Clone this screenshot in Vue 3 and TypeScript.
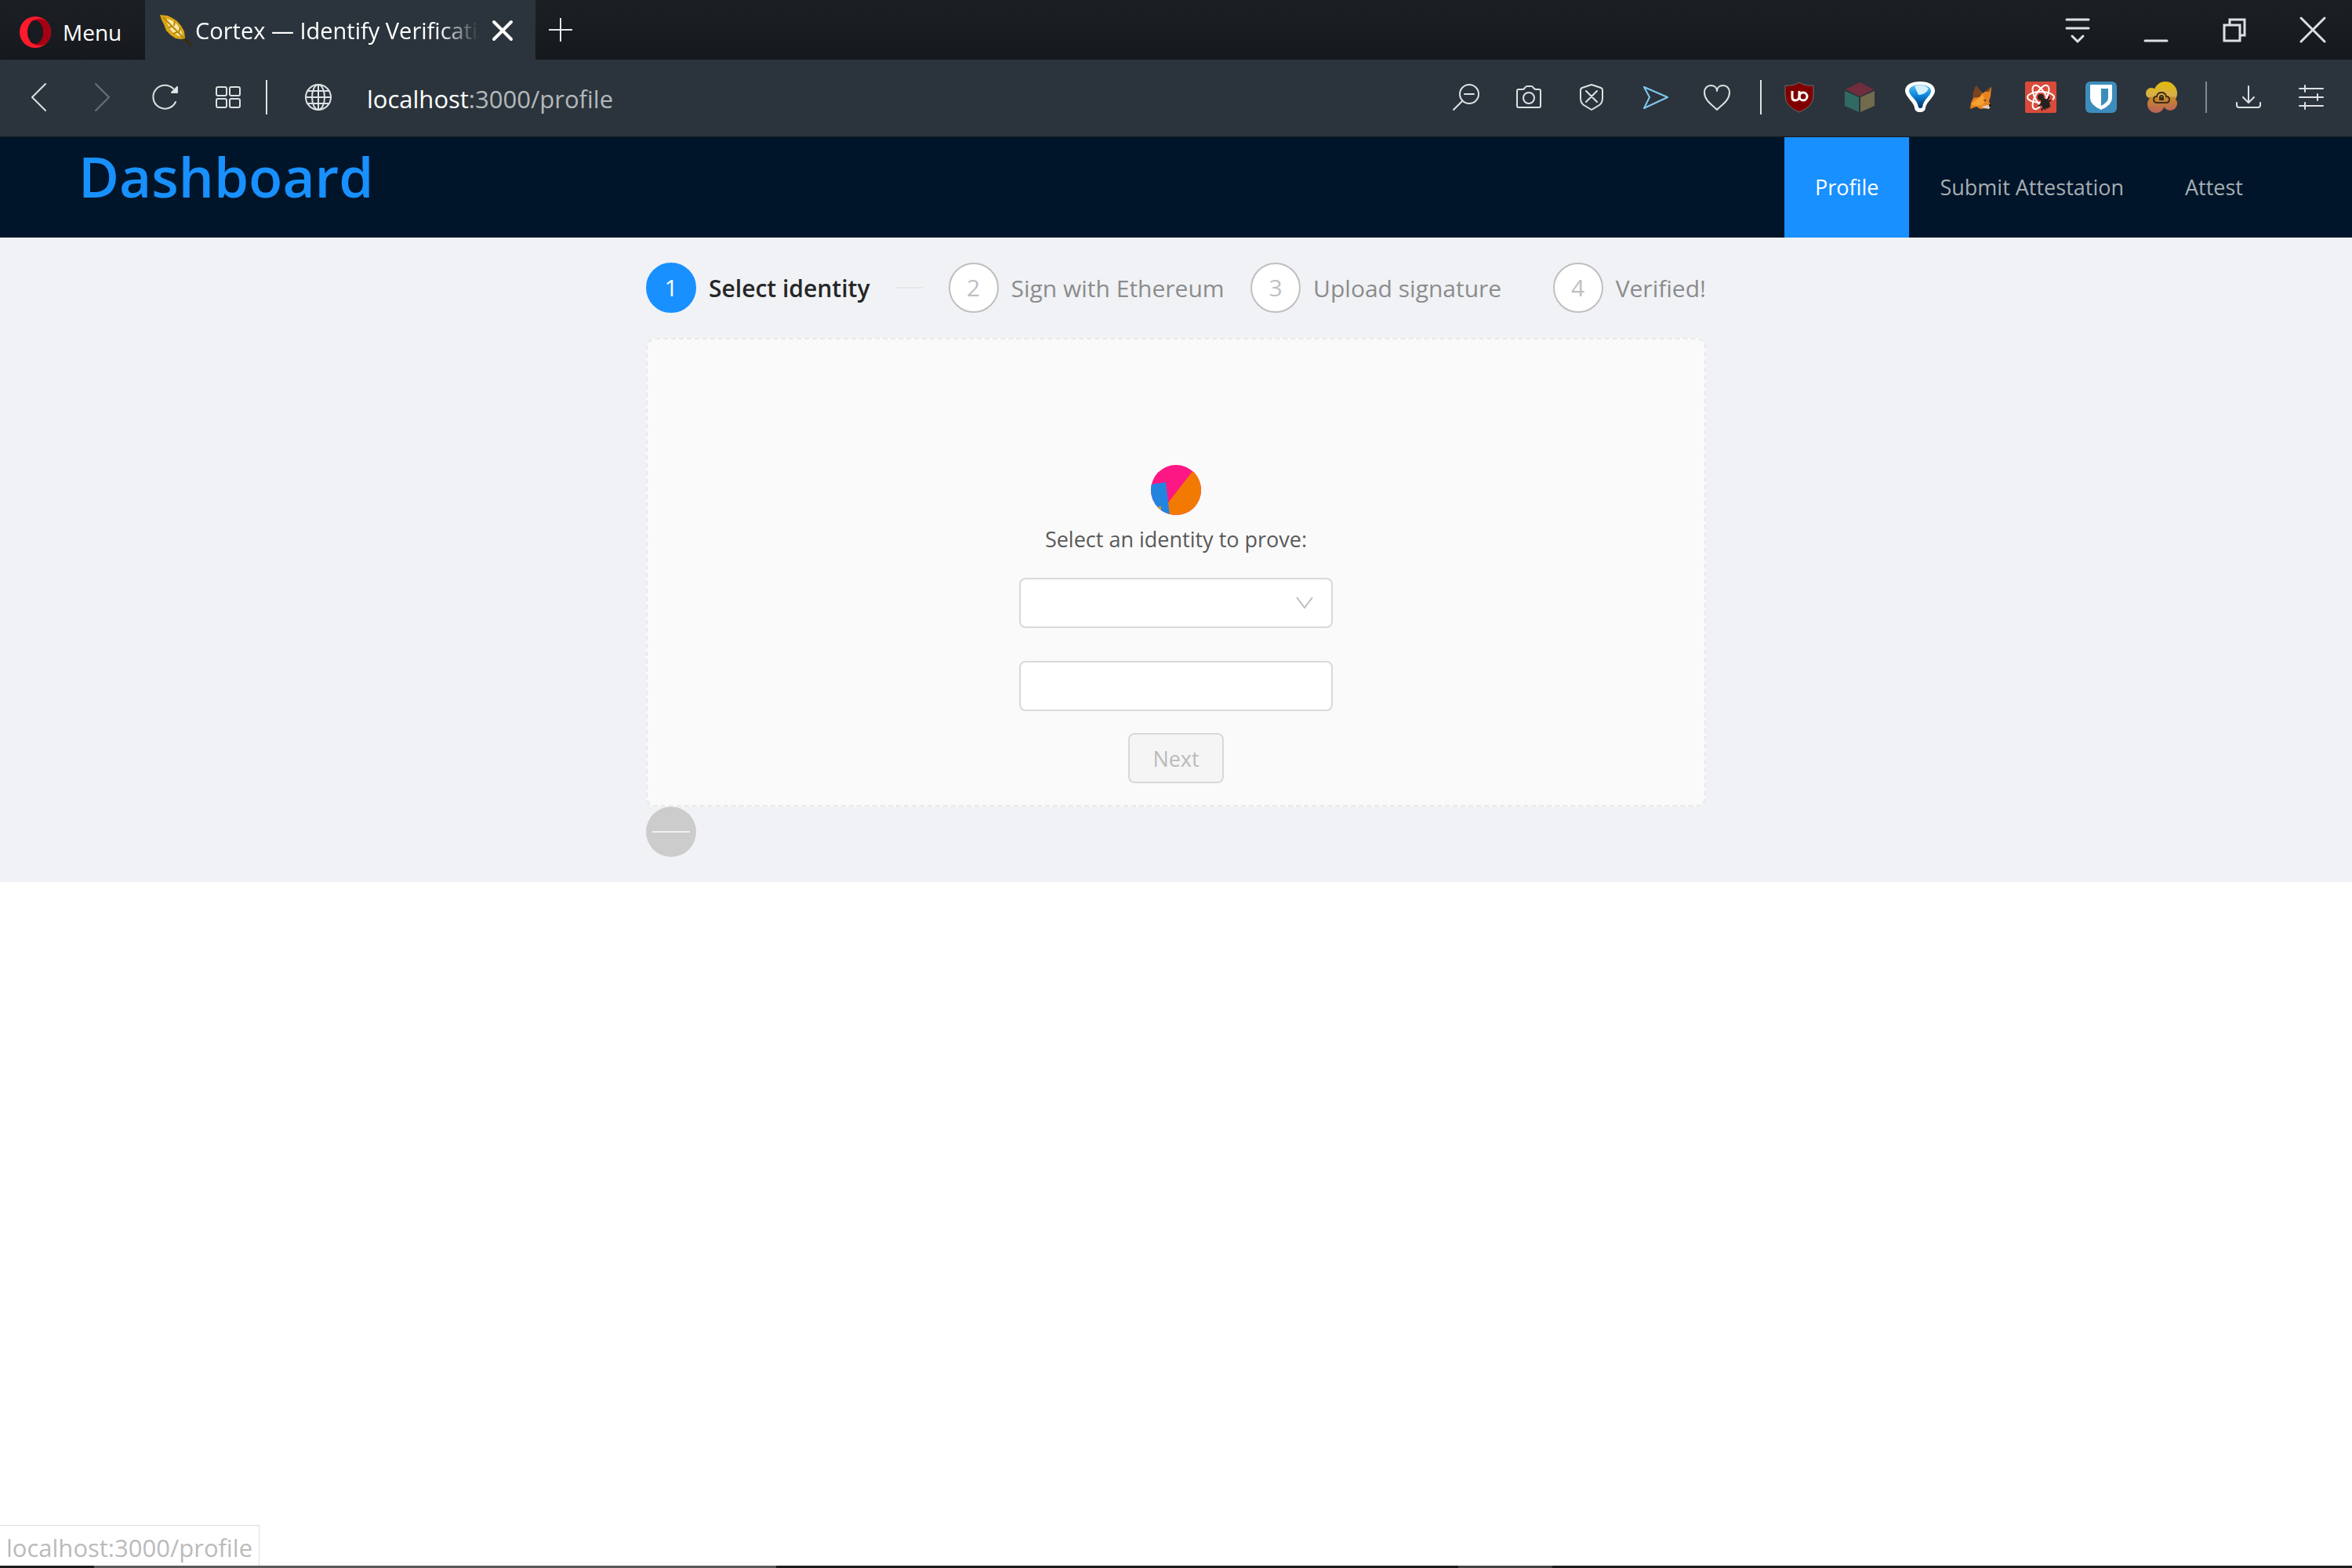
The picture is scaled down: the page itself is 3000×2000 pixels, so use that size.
<script setup lang="ts">
import { ref } from 'vue'

interface Step { title: string; active: boolean }

const steps: Step[] = [
  { title: 'Select identity', active: true },
  { title: 'Sign with Ethereum', active: false },
  { title: 'Upload signature', active: false },
  { title: 'Verified!', active: false },
]
const links = ['Profile', 'Submit Attestation', 'Attest']
const current = ref('Profile')
const provider = ref('')
const identity = ref('')
</script>

<template>
  <div class="window">
    <div class="tabbar">
      <button class="menu" type="button">
        <svg width="40" height="40" viewBox="0 0 40 40" aria-hidden="true">
          <circle cx="20" cy="20" r="20" fill="#ff1b2d" />
          <path fill="#a60014" d="M14 7Q19 3 26 3Q30 3 33 5A20 20 0 0 1 33 35Q30 37 26 37Q19 37 14 33z" />
          <ellipse cx="20" cy="20" rx="10" ry="15" fill="#181b1f" />
        </svg>
        <span>Menu</span>
      </button>
      <div class="tab">
        <svg width="42" height="42" viewBox="0 0 42 42" aria-hidden="true">
          <path fill="#d9a514" d="M1 1l10 1l6 3l6 4l5 6l4 7l1 9l-5 1l-7-1l-6-4l-6-6l-3-8l-3-6z" />
          <path fill="#f9eaa8" d="M10 6l6 2l6 4l4 6l3 6l1 4l-5 0l-7-4l-5-6l-3-7z" />
          <path fill="none" stroke="#b8860b" stroke-width="2" d="M5 4l26 26M12 17l4-1M18 25l5-2M20 9l-1 6M27 17l-2 6" />
          <path fill="#3a2a02" d="M33 31l5 2l-1 4l-4-1zM37 36l5 2l-1 3l-3-1z" />
        </svg>
        <span class="tab-title">Cortex — Identify Verification</span>
        <button class="plain" type="button" aria-label="Close tab">
          <svg width="28" height="28" viewBox="0 0 28 28"><path d="M3 3l22 22M25 3L3 25" stroke="#fff" stroke-width="4" stroke-linecap="round" /></svg>
        </button>
      </div>
      <button class="plain new-tab" type="button" aria-label="New tab">
        <svg width="30" height="30" viewBox="0 0 30 30"><path d="M15 0v30M0 15h30" stroke="#e4e8ea" stroke-width="2" /></svg>
      </button>
      <div class="window-buttons">
        <button class="plain" type="button" aria-label="Tab menu">
          <svg width="40" height="40" viewBox="0 0 40 40" class="line heavy"><path d="M6 9h28M6 20h28M13 30l7 7l7-7" /></svg>
        </button>
        <button class="plain" type="button" aria-label="Minimize">
          <svg width="40" height="40" viewBox="0 0 40 40" class="line heavy"><path d="M6 36h28" /></svg>
        </button>
        <button class="plain" type="button" aria-label="Restore">
          <svg width="40" height="40" viewBox="0 0 40 40" class="line heavy square"><path d="M7 16h20v20H7zM14 16V9h19v20h-6" /></svg>
        </button>
        <button class="plain" type="button" aria-label="Close">
          <svg width="40" height="40" viewBox="0 0 40 40" class="line heavy"><path d="M5 7l30 30M35 7L5 37" /></svg>
        </button>
      </div>
    </div>

    <div class="toolbar">
      <div class="nav-buttons">
        <button class="plain" type="button" aria-label="Back">
          <svg width="40" height="40" viewBox="0 0 40 40" class="line"><path d="M27 3L10 20l17 17" /></svg>
        </button>
        <button class="plain dim" type="button" aria-label="Forward">
          <svg width="40" height="40" viewBox="0 0 40 40" class="line"><path d="M11 3l17 17l-17 17" /></svg>
        </button>
        <button class="plain" type="button" aria-label="Reload">
          <svg width="40" height="40" viewBox="0 0 40 40" class="line"><path d="M33 26A15 15 0 1 1 30 9" /><path d="M35 7v7h-7z" fill="#e4e8ea" /></svg>
        </button>
        <button class="plain" type="button" aria-label="Speed dial">
          <svg width="40" height="40" viewBox="0 0 40 40" class="line"><rect x="5" y="7" width="13" height="11" rx="2" /><rect x="22" y="7" width="13" height="11" rx="2" /><rect x="5" y="22" width="13" height="11" rx="2" /><rect x="22" y="22" width="13" height="11" rx="2" /></svg>
        </button>
      </div>
      <i class="rule"></i>
      <svg class="globe line" width="40" height="40" viewBox="0 0 40 40" aria-hidden="true"><circle cx="20" cy="20" r="16" /><ellipse cx="20" cy="20" rx="8" ry="16" /><path d="M4 20h32M7 12h26M7 28h26M20 4v32" /></svg>
      <div class="address"><b>localhost</b>:3000/profile</div>
      <div class="page-buttons">
        <button class="plain" type="button" aria-label="Zoom out">
          <svg width="40" height="40" viewBox="0 0 40 40" class="line"><circle cx="24" cy="16" r="12" /><path d="M15 25L4 36M18 16h12" /></svg>
        </button>
        <button class="plain" type="button" aria-label="Snapshot">
          <svg width="40" height="40" viewBox="0 0 40 40" class="line"><path d="M7 10h5q2 0 3-2t3-2h5q2 0 3 2t3 2h4q2 0 2 2v19q0 2-2 2H7q-2 0-2-2V12q0-2 2-2z" /><circle cx="20" cy="21" r="7" /></svg>
        </button>
        <button class="plain" type="button" aria-label="Ad blocker">
          <svg width="40" height="40" viewBox="0 0 40 40" class="line"><path d="M20 4l12 4q2 1 2 3v10q0 6-4 9l-10 6l-10-6q-4-3-4-9V11q0-2 2-3zM13 12l14 14M27 12L13 26" /></svg>
        </button>
        <button class="plain flow" type="button" aria-label="My Flow">
          <svg width="40" height="40" viewBox="0 0 40 40" class="line"><path d="M7 7l30 13L7 34l7-14z" /></svg>
        </button>
        <button class="plain" type="button" aria-label="Bookmark">
          <svg width="40" height="40" viewBox="0 0 40 40" class="line"><path d="M20 36C14 30 4 24 4 14c0-6 4-9 8-9c5 0 8 3 8 7c0-4 3-7 8-7c4 0 8 3 8 9c0 10-10 16-16 22z" /></svg>
        </button>
      </div>
      <i class="rule"></i>
      <div class="extensions">
        <button class="plain" type="button" aria-label="uBlock Origin">
          <svg width="40" height="40" viewBox="0 0 40 40"><path fill="#800000" stroke="#6b6b6b" d="M20 1q7 5 18 4v13q0 14-18 21Q2 32 2 18V5q11 1 18-4z" /><path fill="none" stroke="#fff" stroke-width="3" d="M11 12v8q0 4 4 4t5-4v-8" /><circle cx="25" cy="19" r="5" fill="none" stroke="#fff" stroke-width="3" /></svg>
        </button>
        <button class="plain" type="button" aria-label="Cube">
          <svg width="40" height="40" viewBox="0 0 40 40"><path fill="#702d3d" d="M20 1l18 9l-18 9L2 10z" /><path fill="#306a62" d="M1 12l18 8v19L1 31z" /><path fill="#716a4c" d="M39 12l-18 8v19l18-8z" /></svg>
        </button>
        <button class="plain" type="button" aria-label="Balloon">
          <svg width="40" height="40" viewBox="0 0 40 40">
            <defs><linearGradient id="drop" x1="0" y1="0" x2="0" y2="1"><stop offset="0" stop-color="#5cc0f5" /><stop offset=".45" stop-color="#0b86e0" /><stop offset="1" stop-color="#04315f" /></linearGradient></defs>
            <path fill="#fff" d="M20 0c11 0 19 4 19 12c0 7-10 13-12 21c0 4-3 6-7 6s-7-2-7-6C11 25 1 19 1 12C1 4 9 0 20 0z" />
            <path fill="url(#drop)" d="M20 4c8 0 14 3 14 8c0 6-10 11-11 21q-3 2-5 0C17 23 6 18 6 12c0-5 6-8 14-8z" />
            <path fill="#d6effd" d="M13 6q11-4 18 3q-4 8-13 8z" />
          </svg>
        </button>
        <button class="plain" type="button" aria-label="MetaMask">
          <svg width="40" height="40" viewBox="0 0 40 40"><path fill="#e8821e" d="M14 6l9 9l11-8l-1 12l-2 6l2 6l-4 3l-9 1l-5-3l-8 3l1-8l3-6z" /><path fill="#7a4420" d="M15 5l7 10l-3 5l-9 1l1-8zM34 6l-9 7l6 0z" /><path fill="#f8a130" d="M19 20l4-4l3 8l-3 6l-8 1l-7-2z" /><path fill="#e0d0c0" d="M21 32l8-2l4 1l-2 4l-5-1z" /><path fill="#222" d="M31 29h3v3h-3zM23 24l4-1v2z" /></svg>
        </button>
        <button class="plain" type="button" aria-label="React Developer Tools">
          <svg width="40" height="40" viewBox="0 0 40 40"><rect width="40" height="40" rx="2" fill="#d94b3a" /><g fill="none" stroke="#fff" stroke-width="2"><ellipse cx="20" cy="20" rx="17" ry="7" /><ellipse cx="20" cy="20" rx="17" ry="7" transform="rotate(60 20 20)" /><ellipse cx="20" cy="20" rx="17" ry="7" transform="rotate(120 20 20)" /></g><path fill="#d94b3a" d="M20 24l14-4l3 8l-7 9H19z" /><path d="M17 31L33 24M21 37L31 19M26 36l-6-9M32 32L22 23" stroke="#222" stroke-width="2" /><ellipse cx="26" cy="28" rx="5" ry="7" fill="#222" transform="rotate(-35 26 28)" /><circle cx="20" cy="20" r="4" fill="#222" /></svg>
        </button>
        <button class="plain" type="button" aria-label="Bitwarden">
          <svg width="40" height="40" viewBox="0 0 40 40"><rect width="40" height="40" rx="6" fill="#3c8dbc" /><path fill="#fff" d="M7 4h26q1 0 1 1v16q0 9-14 15Q6 30 6 21V5q0-1 1-1z" /><path fill="#3c8dbc" d="M20 9h9v12q0 5-9 10z" /></svg>
        </button>
        <button class="plain" type="button" aria-label="Cloud lock">
          <svg width="40" height="40" viewBox="0 0 40 40">
            <defs><linearGradient id="cloud" gradientUnits="userSpaceOnUse" x1="0" y1="0" x2="0" y2="40"><stop offset="0" stop-color="#e0bb08" /><stop offset=".48" stop-color="#d9ae50" /><stop offset=".5" stop-color="#c98a28" /><stop offset="1" stop-color="#b8605c" /></linearGradient></defs>
            <g fill="url(#cloud)"><circle cx="25" cy="15" r="15" /><circle cx="7" cy="15" r="7" /><circle cx="13" cy="29" r="11" /><circle cx="31" cy="28" r="9" /><path d="M6 12h30v14H8z" /></g>
            <path fill="none" stroke="#3a2d18" stroke-width="2" d="M15 27h11q4 0 4-4t-4-4q-1-5-6-5t-6 5q-4 0-4 4t5 4z" /><path fill="#3a2d18" fill-rule="evenodd" d="M17 20q0-3 3-3t3 3v4h-6zm2 0h2q0-1-1-1t-1 1z" />
          </svg>
        </button>
      </div>
      <i class="rule faint"></i>
      <div class="end-buttons">
        <button class="plain" type="button" aria-label="Downloads">
          <svg width="40" height="40" viewBox="0 0 40 40" class="line"><path d="M20 6v20M13 20l7 7l7-7M5 27v3q0 3 3 3h24q3 0 3-3v-3" /></svg>
        </button>
        <button class="plain" type="button" aria-label="Easy setup">
          <svg width="40" height="40" viewBox="0 0 40 40" class="line"><path d="M5 9h30M5 20h30M5 31h30M12 5v8M28 16v8M12 27v8" /></svg>
        </button>
      </div>
    </div>

    <header class="header">
      <h1>Dashboard</h1>
      <nav>
        <a v-for="link in links" :key="link" href="#" :class="{ on: link === current }" @click.prevent="current = link">{{ link }}</a>
      </nav>
    </header>

    <main class="layout">
      <div class="column">
        <ol class="steps">
          <li v-for="(step, i) in steps" :key="step.title" :class="{ active: step.active }">
            <span class="num">{{ i + 1 }}</span>
            <span class="title">{{ step.title }}</span>
          </li>
        </ol>
        <form class="panel" @submit.prevent>
          <svg class="identicon" width="64" height="64" viewBox="0 0 64 64" aria-hidden="true">
            <clipPath id="round"><circle cx="32" cy="32" r="32" /></clipPath>
            <g clip-path="url(#round)">
              <rect width="64" height="64" fill="#fc1785" />
              <path fill="#f37a02" d="M54 7L22 48v16h42V0z" />
              <path fill="#2485e1" d="M0 25l19-3l5 42H0z" />
              <path fill="#d39a2c" d="M9 53h4v4h-4z" />
            </g>
          </svg>
          <label for="provider">Select an identity to prove:</label>
          <div class="select">
            <select id="provider" v-model="provider"></select>
            <svg width="22" height="16" viewBox="0 0 22 16" aria-hidden="true"><path d="M1 1l10 13L21 1" fill="none" stroke="#bfbfbf" stroke-width="2" /></svg>
          </div>
          <input v-model="identity" type="text" aria-label="Identity">
          <button class="next" type="submit" disabled>Next</button>
        </form>
        <div class="avatar"><i></i></div>
      </div>
    </main>

    <div class="status">localhost:3000/profile</div>
    <div class="taskbar"></div>
  </div>
</template>

<style>
body { margin: 0; background: #fff; }
</style>

<style scoped>
* { box-sizing: border-box; }
.window { position: relative; display: flex; flex-direction: column; min-height: 100vh; font-family: "Open Sans", "Noto Sans", sans-serif; font-size: 27px; }
svg { display: block; flex: none; }
.plain { display: block; padding: 0; border: 0; background: none; }
.line { fill: none; stroke: #dde1e3; stroke-width: 2; stroke-linecap: round; stroke-linejoin: round; }
.heavy { stroke-width: 3; }
.square { stroke-linejoin: miter; }
.dim { opacity: 0.35; }

.tabbar { display: flex; align-items: stretch; height: 76px; background: linear-gradient(#1c2024, #15181c); color: #fff; }
.menu { display: flex; align-items: center; gap: 15px; width: 185px; padding: 6px 0 0 25px; border: 0; border-bottom: 1px solid #101315; background: none; color: #fff; font: inherit; font-size: 28px; }
.tab { display: flex; align-items: center; width: 498px; padding: 2px 28px 0 18px; background: #2b343c; }
.tab-title { flex: 1; min-width: 0; margin: 0 16px 0 4px; overflow: hidden; white-space: nowrap; font-size: 29px; line-height: 40px; -webkit-mask-image: linear-gradient(90deg, #000 86%, transparent); mask-image: linear-gradient(90deg, #000 86%, transparent); }
.new-tab { padding: 0 17px; }
.window-buttons { display: flex; align-items: center; gap: 60px; margin-left: auto; padding: 0 30px 4px 0; }

.toolbar { display: flex; align-items: center; height: 99px; padding-bottom: 2px; border-bottom: 1px solid #14181a; background: #2b343c; color: #b4b8bb; }
.nav-buttons { display: flex; gap: 40px; margin: 0 28px 0 31px; }
.rule { width: 2px; height: 44px; background: #dde1e3; }
.faint { height: 40px; background: #84898d; }
.globe { margin: 0 42px 0 45px; }
.address { flex: 1; padding-top: 4px; font-size: 31px; line-height: 40px; }
.address b { color: #fff; font-weight: 400; }
.page-buttons { display: flex; gap: 40px; margin-right: 35px; }
.flow .line { stroke: #7fc8f0; }
.extensions { display: flex; gap: 37px; margin: 0 36px 0 28px; }
.end-buttons { display: flex; gap: 40px; margin: 0 32px 0 33px; }

.header { display: flex; justify-content: space-between; height: 128px; padding: 0 100px; background: #001529; }
h1 { margin: 0; color: #1890ff; font-size: 71px; font-weight: 600; line-height: 100px; }
nav { display: flex; }
nav a { padding: 0 39px; color: #a6adb4; line-height: 128px; text-decoration: none; }
nav a.on { background: #1890ff; color: #fff; }

.layout { padding: 32px 0; background: #f0f2f5; }
.column { width: calc(45% + 2px); margin: 0 auto; }
.steps { display: flex; gap: 32px; margin: 0 0 32px; padding: 0; list-style: none; font-size: 30px; }
.steps li { display: flex; flex: 1; align-items: center; min-width: 0; color: #8c8c8c; white-space: nowrap; }
.steps li:last-child { flex: none; }
.num { flex: none; width: 64px; height: 64px; margin-right: 16px; border: 2px solid #bfbfbf; border-radius: 50%; background: #fff; color: #bfbfbf; line-height: 60px; text-align: center; }
.active .num { border-color: #1890ff; background: #1890ff; color: #fff; }
.steps .active { color: #262626; font-weight: 600; }
.active .num { font-weight: 400; }
.active::after { content: ""; flex: 1; height: 2px; margin-left: 32px; background: #e8e8e8; }

.panel { display: flex; flex-direction: column; align-items: center; padding: 160px 0 28px; border: 2px dashed #e9e9e9; border-radius: 12px; background: #fafafa; }
label { margin: 10px 0 28px; color: #595959; line-height: 42px; }
.select { position: relative; width: 400px; margin-bottom: 42px; }
.select svg { position: absolute; top: 24px; right: 25px; pointer-events: none; }
select, input { display: block; width: 400px; height: 64px; padding: 0 20px; border: 2px solid #d9d9d9; border-radius: 8px; background: #fff; font: inherit; appearance: none; }
.next { height: 64px; margin-top: 28px; padding: 0 29px; border: 2px solid #d9d9d9; border-radius: 8px; background: #f5f5f5; color: #bbb; font: inherit; }
.avatar { display: flex; align-items: center; width: 64px; height: 64px; padding: 0 8px; border-radius: 50%; background: #ccc; }
.avatar i { flex: 1; height: 2px; background: #f0f0f0; }

.status { position: absolute; bottom: 3px; left: 0; padding: 8px 8px 3px; border: solid #ddd; border-width: 1px 1px 0 0; background: #fff; color: #bbb; font-size: 31px; line-height: 40px; }
.taskbar { height: 3px; margin-top: auto; background: linear-gradient(90deg, #1c1c1c 4%, #5a5a5a 4% 33%, #1c1c1c 33% 62%, #444 62% 66%, #1c1c1c 66%); }
</style>
